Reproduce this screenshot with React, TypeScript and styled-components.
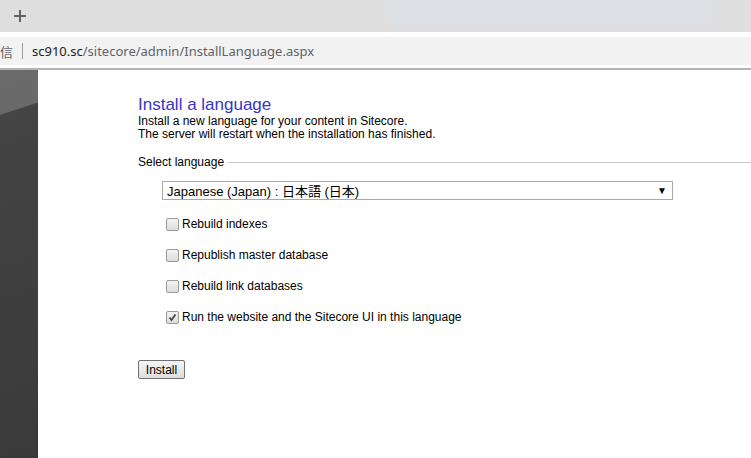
import React from "react";
import styled, { createGlobalStyle } from "styled-components";

const GlobalStyle = createGlobalStyle`
  html, body {
    margin: 0;
    padding: 0;
    background: #ffffff;
  }
  body {
    font-family: "Liberation Sans", Arial, sans-serif;
    width: 751px;
    height: 458px;
    overflow: hidden;
  }
`;

const Window = styled.div`
  display: flex;
  flex-direction: column;
  width: 751px;
  height: 458px;
`;

const TabBar = styled.div`
  display: flex;
  align-items: flex-start;
  height: 32px;
  background: #dfdfe0;
  box-sizing: border-box;
`;

const NewTab = styled.div`
  width: 40px;
  height: 32px;
  display: flex;
  align-items: center;
  justify-content: center;
`;

const TabGhost = styled.div`
  margin-left: 350px;
  width: 319px;
  height: 26px;
  background: #dde0e5;
`;

const Gap = styled.div`
  height: 5px;
  background: #ffffff;
`;

const AddressBar = styled.div`
  display: flex;
  align-items: center;
  height: 28px;
  background: #f2f2f2;
  font-family: "Noto Sans", "Noto Sans CJK SC", sans-serif;
  font-size: 13px;
  color: #5f6368;
`;

const SecureMark = styled.span`
  font-family: "Noto Sans CJK SC", sans-serif;
  font-size: 13px;
  color: #5f6368;
`;

const Divider = styled.span`
  width: 1px;
  height: 16px;
  background: #9aa0a6;
  margin: 0 9px 0 9px;
`;

const Host = styled.span`
  color: #202124;
`;

const BarEdge = styled.div`
  height: 3px;
  background: #ffffff;
  border-bottom: 2px solid #b4b4b4;
`;

const Body = styled.div`
  flex: 1;
  display: flex;
`;

const SideBar = styled.div`
  width: 38px;
  background: linear-gradient(
    162deg,
    #6b6b6b 0%,
    #6a6a6a 11%,
    #444444 11.4%,
    #3a3a3a 100%
  );
`;

const Main = styled.div`
  flex: 1;
  padding: 25px 0 0 100px;
  font-size: 12px;
  color: #000000;
`;

const Title = styled.h1`
  margin: 0;
  font-size: 17px;
  font-weight: normal;
  line-height: 20px;
  color: #3636c8;
`;

const Intro = styled.p`
  margin: 0;
  line-height: 13px;
`;

const Legend = styled.div`
  display: flex;
  align-items: center;
  margin-top: 14px;
  line-height: 14px;
  &::after {
    content: "";
    flex: 1;
    height: 1px;
    margin-left: 4px;
    background: #c8c8c8;
  }
`;

const Options = styled.div`
  display: flex;
  flex-direction: column;
  padding: 12px 0 0 24px;
`;

const Select = styled.div`
  width: 500px;
  height: 17px;
  border: 1px solid #a9a9a9;
  display: flex;
  align-items: center;
  justify-content: space-between;
  padding: 0 5px 0 4px;
  box-sizing: content-box;
  font-family: "Liberation Sans", "Noto Sans CJK JP", sans-serif;
  font-size: 13px;
`;

const Arrow = styled.span`
  font-size: 10px;
  color: #000;
`;

const CheckList = styled.div`
  display: flex;
  flex-direction: column;
  gap: 17px;
  margin-top: 17px;
  padding-left: 4px;
`;

const CheckRow = styled.label`
  display: flex;
  align-items: center;
  height: 14px;
`;

const Box = styled.span`
  width: 11px;
  height: 11px;
  border: 1px solid #9a9a9a;
  border-radius: 2px;
  background: linear-gradient(#f4f4f4, #dcdcdc);
  margin-right: 3px;
  display: flex;
  align-items: center;
  justify-content: center;
`;

const Button = styled.button`
  margin-top: 36px;
  width: 47px;
  height: 19px;
  padding: 0;
  border: 1px solid #707070;
  border-radius: 2px;
  background: linear-gradient(#f4f4f4, #dedede);
  font-family: "Liberation Sans", Arial, sans-serif;
  font-size: 12px;
  color: #000;
`;

const Check = ({ label, checked }: { label: string; checked?: boolean }) => (
  <CheckRow>
    <Box>
      {checked && (
        <svg width="9" height="9" viewBox="0 0 9 9">
          <path d="M1.5 4.5 L3.5 7 L7.5 1.5" fill="none" stroke="#4a4a4a" strokeWidth="1.8" />
        </svg>
      )}
    </Box>
    {label}
  </CheckRow>
);

const App = () => (
  <Window>
    <GlobalStyle />
    <TabBar>
      <NewTab>
        <svg width="12" height="12" viewBox="0 0 12 12">
          <path d="M6 0 V12 M0 6 H12" stroke="#5f6368" strokeWidth="2" />
        </svg>
      </NewTab>
      <TabGhost />
    </TabBar>
    <Gap />
    <AddressBar>
      <SecureMark>信</SecureMark>
      <Divider />
      <Host>sc910.sc</Host>/sitecore/admin/InstallLanguage.aspx
    </AddressBar>
    <BarEdge />
    <Body>
      <SideBar />
      <Main>
        <Title>Install a language</Title>
        <Intro>
          Install a new language for your content in Sitecore.
          <br />
          The server will restart when the installation has finished.
        </Intro>
        <Legend>Select language</Legend>
        <Options>
          <Select>
            <span>Japanese (Japan) : 日本語 (日本)</span>
            <Arrow>▼</Arrow>
          </Select>
          <CheckList>
            <Check label="Rebuild indexes" />
            <Check label="Republish master database" />
            <Check label="Rebuild link databases" />
            <Check label="Run the website and the Sitecore UI in this language" checked />
          </CheckList>
        </Options>
        <Button>Install</Button>
      </Main>
    </Body>
  </Window>
);

export default App;
